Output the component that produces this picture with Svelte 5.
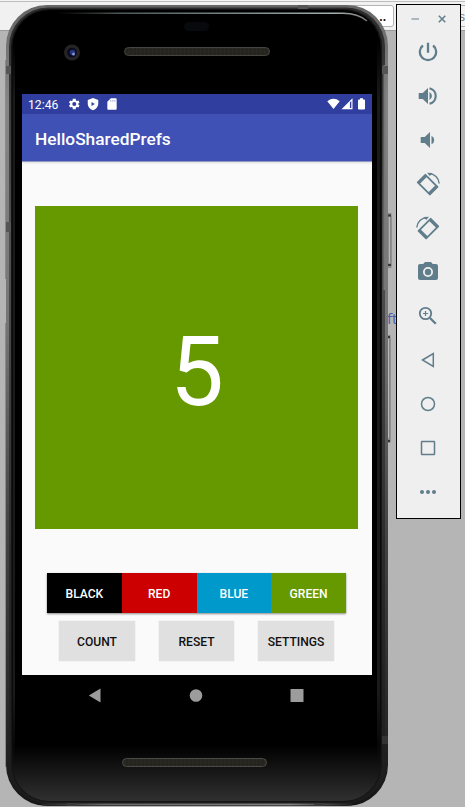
<script>
  const colors = [
    { name: 'BLACK', cls: 'black' },
    { name: 'RED', cls: 'red' },
    { name: 'BLUE', cls: 'blue' },
    { name: 'GREEN', cls: 'green' }
  ];
  const actions = ['COUNT', 'RESET', 'SETTINGS'];
</script>

<div class="desktop">
  <div class="browser">
    <div class="field"><span>..</span></div>
    <div class="field next">s</div>
  </div>
  <span class="link">ft</span>

  <div class="phone">
    <svg class="shell" width="465" height="807" viewBox="0 0 465 807" aria-hidden="true">
      <defs>
        <linearGradient id="edge" x1="0" y1="0" x2="0" y2="1">
          <stop offset="0" stop-color="#666" />
          <stop offset=".12" stop-color="#858585" />
          <stop offset=".4" stop-color="#757575" />
          <stop offset=".65" stop-color="#444" />
          <stop offset=".9" stop-color="#262626" />
          <stop offset="1" stop-color="#161616" />
        </linearGradient>
        <linearGradient id="rim" x1="0" y1="0" x2="0" y2="1">
          <stop offset="0" stop-color="#2c2c2c" />
          <stop offset=".3" stop-color="#505050" />
          <stop offset=".7" stop-color="#2a2a2a" />
          <stop offset="1" stop-color="#1c1c1c" />
        </linearGradient>
        <linearGradient id="face" x1="0" y1="0" x2="0" y2="1">
          <stop offset="0" stop-color="#000" />
          <stop offset=".93" stop-color="#000" />
          <stop offset="1" stop-color="#303030" />
        </linearGradient>
        <linearGradient id="side" gradientUnits="userSpaceOnUse" x1="0" y1="40" x2="0" y2="765">
          <stop offset="0" stop-color="#1a1a1a" stop-opacity="0" />
          <stop offset=".08" stop-color="#1a1a1a" />
          <stop offset=".9" stop-color="#1a1a1a" />
          <stop offset="1" stop-color="#1a1a1a" stop-opacity="0" />
        </linearGradient>
        <linearGradient id="glint" gradientUnits="userSpaceOnUse" x1="57" y1="0" x2="367" y2="0">
          <stop offset="0" stop-color="#444" stop-opacity="0" />
          <stop offset=".2" stop-color="#4f5858" />
          <stop offset=".9" stop-color="#a5afaf" />
          <stop offset="1" stop-color="#777" />
        </linearGradient>
        <linearGradient id="foot" gradientUnits="userSpaceOnUse" x1="40" y1="0" x2="352" y2="0">
          <stop offset="0" stop-color="#222" />
          <stop offset=".2" stop-color="#666" />
          <stop offset=".8" stop-color="#808080" />
          <stop offset="1" stop-color="#222" />
        </linearGradient>
        <pattern id="mesh" width="4" height="3" patternUnits="userSpaceOnUse">
          <rect width="4" height="3" fill="#25241f" />
          <rect width="1.5" height="1.5" fill="#2e2c26" />
        </pattern>
      </defs>
      <path d="M385 213h6.500v55H385z" fill="#8a8a8a" />
      <path d="M385 335h5.500v108H385z" fill="#8a8a8a" />
      <path d="M389.500 217v46M388.500 339v99" stroke="#b8b8b8" />
      <path d="M391 216v50M390 338v103" stroke="#808080" />
      <path d="M388 215.500h3M388 265h3M387 337h3M387 441h3" stroke="#363636" stroke-width="2" />
      <path d="M5.500 60V279M5.500 323V767" stroke="#8a8a8a" />
      <rect x="6" y="5" width="382" height="801" rx="41" fill="url(#edge)" />
      <rect x="9" y="7.500" width="376" height="796" rx="39" fill="url(#rim)" />
      <rect x="11" y="9" width="371" height="793" rx="38" fill="#151515" />
      <rect x="12.500" y="10" width="368" height="791" rx="37" fill="url(#face)" />
      <rect x="13" y="40" width="2" height="725" fill="url(#side)" />
      <rect x="377" y="40" width="3" height="725" fill="url(#side)" />
      <path d="M384.500 65V290" stroke="#777" stroke-width="2" />
      <path d="M6 66h5v8H6zM382 66h6v8h-6zM6 222h5v10H6zM298 5h10v4h-10z" fill="#555" />
      <path d="M382 736h6v8h-6z" fill="#333" />
      <path d="M42 804.500H352" stroke="url(#foot)" stroke-width="2" />
      <path d="M67 803h11v3H67zM314 803h11v3h-11z" fill="#3b3b3b" />
      <path d="M57 13.300H343Q358 13.300 367 21" fill="none" stroke="url(#glint)" stroke-width="1.500" />
      <rect x="184" y="22" width="25" height="9" rx="4.500" fill="#08090d" />
      <circle cx="72" cy="52.500" r="8" fill="#252323" />
      <circle cx="72" cy="52.500" r="4.800" fill="#080a20" />
      <circle cx="72.500" cy="52.500" r="2.800" fill="#283477" />
      <circle cx="73.500" cy="54" r="1.500" fill="#7e93dd" />
      <rect x="124.500" y="47.500" width="145" height="8" rx="4" fill="url(#mesh)" stroke="#454440" />
      <rect x="122.500" y="758.500" width="144" height="8" rx="4" fill="url(#mesh)" stroke="#4b4945" />
    </svg>

    <main class="screen">
      <div class="status">
        <span class="time">12:46</span>
        <svg class="gear" width="14" height="14" viewBox="0 0 24 24"><path fill-rule="evenodd" d="M19.400 13a8 8 0 0 0 0-2l2.100-1.700-2-3.500-2.500 1a8 8 0 0 0-1.700-1L15 3h-5l-.4 2.800a8 8 0 0 0-1.700 1l-2.500-1-2 3.500L5.500 11a8 8 0 0 0 0 2l-2.100 1.700 2 3.500 2.500-1a8 8 0 0 0 1.700 1L10 21h5l.3-2.800a8 8 0 0 0 1.700-1l2.500 1 2-3.500zM12.500 15.500a3.500 3.500 0 1 1 0-7 3.500 3.500 0 0 1 0 7z" /></svg>
        <svg class="shield" width="14" height="14" viewBox="0 0 24 24"><path fill-rule="evenodd" d="M12 1.500 3 5v6c0 5.500 3.800 10.200 9 11.500 5.200-1.300 9-6 9-11.500V5zM9.500 8.500l5.500 3.500-5.500 3.500z" /></svg>
        <svg class="sd" width="14" height="14" viewBox="0 0 24 24"><path fill-rule="evenodd" d="M18 2h-8L4 8v12c0 1.100.9 2 2 2h12c1.100 0 2-.9 2-2V4c0-1.100-.9-2-2-2zM9.500 5.500h1v2h-1zm3.500 0h1v2h-1zm3.500 0h1v2h-1z" /></svg>
        <span class="grow"></span>
        <svg width="13" height="12" viewBox="0 0 13 12"><path d="M.3 3.200Q6.500-1.500 12.700 3.200L6.500 11z" /></svg>
        <svg class="signal" width="12" height="12" viewBox="0 0 12 12"><path fill-rule="evenodd" d="M.5 11.200 11.500.3v10.900zM8.900 4.500v5.500h1.400V3.100z" /></svg>
        <svg class="battery" width="7" height="12" viewBox="0 0 7 12"><path d="M2 .3h3v1.200h1q1 0 1 1v8q0 1-1 1H1q-1 0-1-1v-8q0-1 1-1h1z" /></svg>
      </div>
      <header><h1>HelloSharedPrefs</h1></header>
      <section class="content">
        <div class="count"><span>5</span></div>
        <div class="colors">
          {#each colors as color}
            <button class={color.cls}>{color.name}</button>
          {/each}
        </div>
        <div class="actions">
          {#each actions as action}
            <button>{action}</button>
          {/each}
        </div>
      </section>
    </main>

    <nav>
      <svg width="14" height="16" viewBox="0 0 14 16"><path d="M.8 7.500 12.500.6v13.800z" /></svg>
      <svg width="14" height="16" viewBox="0 0 14 16"><circle cx="7" cy="7.500" r="6.300" /></svg>
      <svg width="14" height="16" viewBox="0 0 14 16"><rect x=".5" y="1" width="13" height="13" rx=".5" /></svg>
    </nav>
  </div>

  <aside class="tools">
    <div class="window">
      <svg width="10" height="10" viewBox="0 0 10 10"><path d="M1.500 5H9" stroke="#a0b1b8" stroke-width="1.800" /></svg>
      <svg width="10" height="10" viewBox="0 0 10 10"><path d="m1.800 1.800 6.500 6.500m0-6.500L1.800 8.300" stroke="#607d8b" stroke-width="1.500" /></svg>
    </div>
    <svg viewBox="0 0 24 24"><path class="line" d="M12 2.700v10M6.900 5.500a8.200 8.200 0 1 0 10.200 0" stroke-width="2.300" /></svg>
    <svg viewBox="0 0 24 24"><path d="M2.700 9v6h4l5.300 5V4L6.700 9zM13.500 8v8a4.500 4.500 0 0 0 0-8z" /><path class="line" d="M13.500 4.200a8 8 0 0 1 0 15.600" stroke-width="2.200" /></svg>
    <svg viewBox="0 0 24 24"><path d="M4.700 9v6h4l5.300 5V4L8.700 9zM15.500 7.800v8.400a4.600 4.600 0 0 0 0-8.400z" /></svg>
    <svg viewBox="0 0 24 24">
      <g transform="rotate(45 11.600 12.600)"><path fill-rule="evenodd" d="M3.100 6.300h17q1 0 1 1v10.600q0 1-1 1h-17q-1 0-1-1V7.300q0-1 1-1zM5.600 8.100v9h12v-9z" /></g>
      <path class="line" d="M13 1.600A10.500 10.500 0 0 1 23.200 11.500" stroke-width="1.400" /><path d="m11 .8 5.500.3-2.700 3z" />
    </svg>
    <svg viewBox="0 0 24 24">
      <g transform="rotate(-45 12.400 12.600)"><path fill-rule="evenodd" d="M3.900 6.300h17q1 0 1 1v10.600q0 1-1 1h-17q-1 0-1-1V7.300q0-1 1-1zM6.400 8.100v9h12v-9z" /></g>
      <path class="line" d="M11 1.600A10.500 10.500 0 0 0 .8 11.500" stroke-width="1.400" /><path d="m13 .8-5.500.3 2.700 3z" />
    </svg>
    <svg viewBox="0 0 24 24"><path fill-rule="evenodd" d="M9 2 7.200 4H4a2 2 0 0 0-2 2v12a2 2 0 0 0 2 2h16a2 2 0 0 0 2-2V6a2 2 0 0 0-2-2h-3.200L15 2zM12 17a5 5 0 1 1 0-10 5 5 0 0 1 0 10z" /><circle cx="12" cy="12" r="3.200" /></svg>
    <svg viewBox="0 0 24 24"><circle class="line" cx="9.500" cy="9.500" r="5.700" stroke-width="1.800" /><path class="line" d="m14 14 5.800 5.800" stroke-width="2.300" /><path class="line" d="M9.500 6.900v5.200M6.900 9.500h5.200" stroke-width="1.200" /></svg>
    <svg viewBox="0 0 24 24"><path class="line" d="M6.500 12 17.300 5.500v13z" stroke-width="1.500" /></svg>
    <svg viewBox="0 0 24 24"><circle class="line" cx="12" cy="12" r="6.500" stroke-width="1.500" /></svg>
    <svg viewBox="0 0 24 24"><rect class="line" x="5.500" y="5.500" width="13" height="13" rx=".5" stroke-width="1.500" /></svg>
    <svg viewBox="0 0 24 24"><circle cx="6" cy="12" r="2" /><circle cx="12" cy="12" r="2" /><circle cx="18" cy="12" r="2" /></svg>
  </aside>
</div>

<style>
  .desktop {
    position: relative;
    width: 465px;
    height: 807px;
    overflow: hidden;
    background: #b5b5b5;
    font-family: Roboto, sans-serif;
  }
  .browser {
    display: flex;
    justify-content: flex-end;
    gap: 66px;
    box-sizing: border-box;
    height: 31px;
    padding-top: 5px;
    background: linear-gradient(#f5f5f5 1px, #bdbdbd 1px, #bdbdbd 2px, #f1f1f1 2px);
    border-bottom: 1px solid #999;
  }
  .field {
    display: flex;
    justify-content: flex-end;
    box-sizing: border-box;
    width: 180px;
    height: 22px;
    padding-right: 7px;
    border: 1px solid #b4b4b4;
    border-radius: 3px;
    background: #fff;
    color: #111;
    font: bold 12px/22px "Liberation Sans", sans-serif;
  }
  .field.next {
    width: 5px;
    padding: 0;
    border-width: 1px 0;
    border-radius: 0;
    background: #f4f4f4;
    color: #777;
    font-weight: normal;
  }
  .link {
    position: absolute;
    left: 387px;
    top: 309px;
    color: #4a5ca8;
    font: 15px/18px "Open Sans", sans-serif;
  }
  .phone {
    position: absolute;
    inset: 0 auto auto 0;
    box-sizing: border-box;
    width: 394px;
    height: 807px;
    padding: 94px 22px 0;
  }
  .shell {
    position: absolute;
    left: 0;
    top: 0;
  }
  .screen {
    position: relative;
    width: 350px;
    height: 581px;
    overflow: hidden;
    background: #fafafa;
  }
  .status {
    display: flex;
    align-items: center;
    box-sizing: border-box;
    height: 20px;
    padding: 0 7px 0 6px;
    background: #303f9f;
    color: #fff;
    font-size: 12.200px;
  }
  .status svg { fill: #fff; flex: none; }
  .time { width: 39px; padding-top: 1px; }
  .shield, .sd { margin-left: 5px; }
  .grow { flex: 1; }
  .signal { margin-left: 1px; }
  .battery { margin-left: 5px; }
  header {
    display: flex;
    align-items: center;
    box-sizing: border-box;
    height: 47px;
    padding: 2px 13px 0;
    background: #3f51b5;
    box-shadow: 0 1px 0 #9299c0, 0 2px 2px #ddd;
  }
  h1 {
    margin: 0;
    color: #fff;
    font-size: 17.300px;
    font-weight: 500;
    line-height: 24px;
  }
  .content {
    display: flex;
    flex-direction: column;
    align-items: center;
    padding: 45px 1px 0 0;
  }
  .count {
    display: flex;
    align-items: center;
    justify-content: center;
    width: 323px;
    height: 323px;
    background: #669900;
    color: #fff;
    font-size: 96px;
    line-height: 112px;
  }
  .count span { padding: 9px 0 0 1px; }
  button {
    box-sizing: border-box;
    padding: 0;
    border: 0;
    font-family: Roboto, sans-serif;
    font-size: 12.100px;
    font-weight: 500;
  }
  .colors {
    display: flex;
    width: 299px;
    height: 40px;
    margin: 44px 0 0;
    box-shadow: 0 1px 2px #888;
  }
  .colors button { flex: 1; padding-top: 1px; color: #fff; }
  .black { background: #000; }
  .red { background: #cc0000; }
  .blue { background: #0099cc; }
  .green { background: #669900; }
  .actions {
    display: flex;
    gap: 24px;
    margin-top: 8px;
  }
  .actions button {
    width: 75.500px;
    height: 40px;
    padding-top: 1px;
    background: #e0e0e0;
    color: #101010;
    box-shadow: 0 0 1px #ccc;
  }
  nav {
    position: relative;
    display: flex;
    gap: 87.200px;
    padding: 13px 0 0 66px;
  }
  nav svg { flex: none; fill: #9c9c9c; }
  .tools {
    position: absolute;
    left: 396px;
    top: 4px;
    display: flex;
    flex-direction: column;
    align-items: center;
    gap: 20px;
    box-sizing: border-box;
    width: 65px;
    height: 515px;
    padding-right: 1px;
    border: 1px solid #000;
    background: #efefef;
  }
  .tools > svg { flex: none; width: 24px; height: 24px; fill: #607d8b; }
  .tools .line { fill: none; stroke: #607d8b; }
  .window {
    display: flex;
    gap: 17px;
    height: 15px;
    box-sizing: border-box;
    padding: 9px 0 0 1px;
    flex: none;
  }
  .window svg { flex: none; }
</style>
